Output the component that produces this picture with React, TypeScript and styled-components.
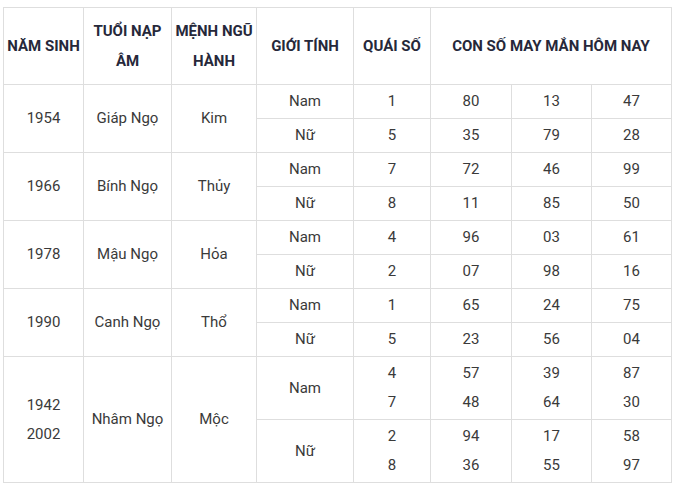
import styled, { createGlobalStyle } from 'styled-components'

const GlobalStyle = createGlobalStyle`
  html, body {
    margin: 0;
    padding: 0;
    background: #ffffff;
  }
  body {
    font-family: Roboto, "Noto Sans", "Liberation Sans", sans-serif;
  }
`

type Line = { q: string; nums: string[] }
type GenderRow = { gender: string; lines: Line[] }
type Group = { years: string[]; tuoi: string; menh: string; rows: GenderRow[] }

const groups: Group[] = [
  {
    years: ['1954'],
    tuoi: 'Giáp Ngọ',
    menh: 'Kim',
    rows: [
      { gender: 'Nam', lines: [{ q: '1', nums: ['80', '13', '47'] }] },
      { gender: 'Nữ', lines: [{ q: '5', nums: ['35', '79', '28'] }] },
    ],
  },
  {
    years: ['1966'],
    tuoi: 'Bính Ngọ',
    menh: 'Thủy',
    rows: [
      { gender: 'Nam', lines: [{ q: '7', nums: ['72', '46', '99'] }] },
      { gender: 'Nữ', lines: [{ q: '8', nums: ['11', '85', '50'] }] },
    ],
  },
  {
    years: ['1978'],
    tuoi: 'Mậu Ngọ',
    menh: 'Hỏa',
    rows: [
      { gender: 'Nam', lines: [{ q: '4', nums: ['96', '03', '61'] }] },
      { gender: 'Nữ', lines: [{ q: '2', nums: ['07', '98', '16'] }] },
    ],
  },
  {
    years: ['1990'],
    tuoi: 'Canh Ngọ',
    menh: 'Thổ',
    rows: [
      { gender: 'Nam', lines: [{ q: '1', nums: ['65', '24', '75'] }] },
      { gender: 'Nữ', lines: [{ q: '5', nums: ['23', '56', '04'] }] },
    ],
  },
  {
    years: ['1942', '2002'],
    tuoi: 'Nhâm Ngọ',
    menh: 'Mộc',
    rows: [
      {
        gender: 'Nam',
        lines: [
          { q: '4', nums: ['57', '39', '87'] },
          { q: '7', nums: ['48', '64', '30'] },
        ],
      },
      {
        gender: 'Nữ',
        lines: [
          { q: '2', nums: ['94', '17', '58'] },
          { q: '8', nums: ['36', '55', '97'] },
        ],
      },
    ],
  },
]

const colWidths = [80, 88, 85, 97, 77, 81, 80, 80]

const Table = styled.table`
  margin: 7px 0 0 3px;
  border-collapse: collapse;
  table-layout: fixed;
  width: 669px;
`

const HeadCell = styled.th`
  border: 1px solid #dedede;
  height: 76px;
  padding: 0 2px;
  font-size: 15px;
  font-weight: 700;
  line-height: 30px;
  color: #26283a;
  text-align: center;
  vertical-align: middle;
`

const Cell = styled.td<{ $tall?: boolean }>`
  border: 1px solid #dedede;
  height: ${({ $tall }) => ($tall ? '62px' : '33px')};
  padding: 0 2px;
  font-size: 15px;
  line-height: 29px;
  color: #3a3a3a;
  text-align: center;
  vertical-align: middle;
`

const Stack = styled.div`
  display: flex;
  flex-direction: column;
  align-items: center;
`

const Lines = ({ items }: { items: string[] }) => (
  <Stack>
    {items.map((t, i) => (
      <span key={i}>{t}</span>
    ))}
  </Stack>
)

export default function App() {
  return (
    <>
      <GlobalStyle />
      <Table>
        <colgroup>
          {colWidths.map((w, i) => (
            <col key={i} style={{ width: w }} />
          ))}
        </colgroup>
        <thead>
          <tr>
            <HeadCell>NĂM SINH</HeadCell>
            <HeadCell>
              TUỔI NẠP
              <br />
              ÂM
            </HeadCell>
            <HeadCell>
              MỆNH NGŨ
              <br />
              HÀNH
            </HeadCell>
            <HeadCell>GIỚI TÍNH</HeadCell>
            <HeadCell>QUÁI SỐ</HeadCell>
            <HeadCell colSpan={3}>CON SỐ MAY MẮN HÔM NAY</HeadCell>
          </tr>
        </thead>
        <tbody>
          {groups.map((g) =>
            g.rows.map((r, ri) => {
              const tall = r.lines.length > 1
              return (
                <tr key={g.tuoi + r.gender}>
                  {ri === 0 && (
                    <>
                      <Cell rowSpan={g.rows.length}>
                        <Lines items={g.years} />
                      </Cell>
                      <Cell rowSpan={g.rows.length}>{g.tuoi}</Cell>
                      <Cell rowSpan={g.rows.length}>{g.menh}</Cell>
                    </>
                  )}
                  <Cell $tall={tall}>{r.gender}</Cell>
                  <Cell $tall={tall}>
                    <Lines items={r.lines.map((l) => l.q)} />
                  </Cell>
                  {[0, 1, 2].map((n) => (
                    <Cell key={n} $tall={tall}>
                      <Lines items={r.lines.map((l) => l.nums[n])} />
                    </Cell>
                  ))}
                </tr>
              )
            })
          )}
        </tbody>
      </Table>
    </>
  )
}
